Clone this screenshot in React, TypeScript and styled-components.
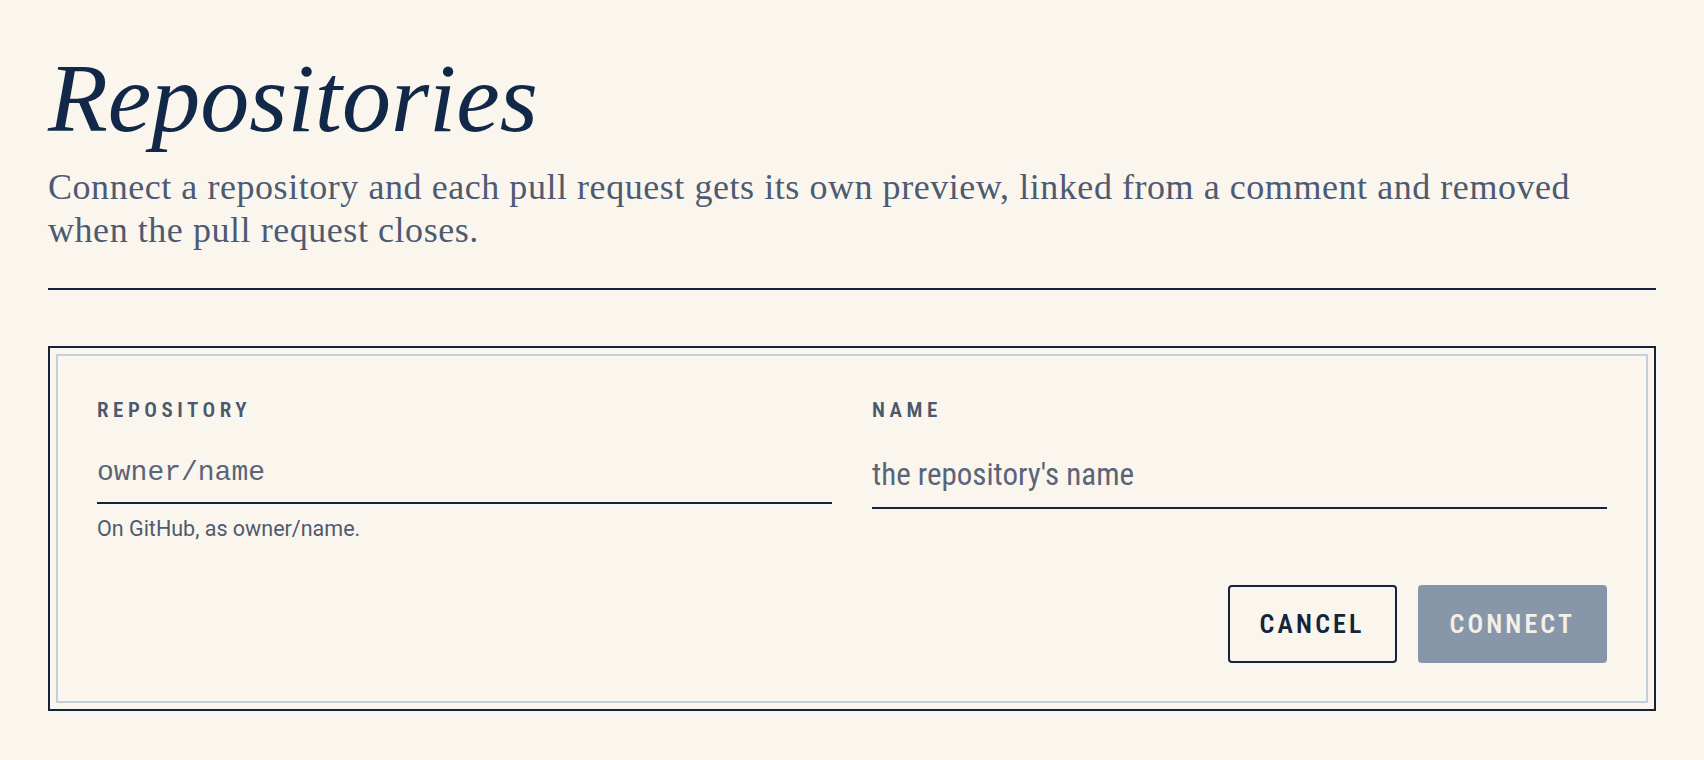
import React from "react";
import styled, { createGlobalStyle } from "styled-components";

const INK = "#14243b";
const MUTED = "#4d5a72";

const GlobalStyle = createGlobalStyle`
  html, body {
    margin: 0;
    padding: 0;
    background: #faf6ee;
  }

  * {
    box-sizing: border-box;
  }
`;

const Page = styled.main`
  padding: 44px 48px 48px;
  display: flex;
  flex-direction: column;
`;

const Title = styled.h1`
  margin: 0;
  font-family: "Liberation Serif", "Times New Roman", serif;
  font-style: italic;
  font-weight: 400;
  font-size: 98px;
  line-height: 108px;
  color: #112848;
`;

const Lede = styled.p`
  margin: 14px 0 0;
  max-width: 1560px;
  font-family: "Liberation Serif", "Times New Roman", serif;
  font-size: 36px;
  line-height: 43px;
  letter-spacing: 0.55px;
  color: ${MUTED};
`;

const Divider = styled.hr`
  margin: 36px 0 0;
  border: none;
  border-top: 2px solid ${INK};
`;

const Card = styled.form`
  margin-top: 56px;
  border: 2px solid ${INK};
  padding: 6px;
`;

const CardInner = styled.div`
  border: 2px solid #c3ced7;
  padding: 40px 39px 38px;
  display: flex;
  flex-direction: column;
`;

const Fields = styled.div`
  display: grid;
  grid-template-columns: 1fr 1fr;
  column-gap: 40px;
  align-items: start;
`;

const Field = styled.label`
  display: flex;
  flex-direction: column;
`;

const FieldLabel = styled.span`
  font-family: Roboto, "Liberation Sans", sans-serif;
  font-weight: 600;
  font-size: 21px;
  font-stretch: 87.5%;
  line-height: 28px;
  letter-spacing: 0.215em;
  text-transform: uppercase;
  color: #4b586d;
`;

const TextInput = styled.input<{ $mono?: boolean }>`
  margin-top: 19px;
  width: 100%;
  padding: ${(p) => (p.$mono ? "14px 0" : "13px 0 14px")};
  border: none;
  border-bottom: 2px solid ${INK};
  border-radius: 0;
  background: transparent;
  outline: none;
  color: ${INK};
  line-height: normal;
  font-family: ${(p) =>
    p.$mono ? `"Liberation Mono", "Courier New", monospace` : `Roboto, "Liberation Sans", sans-serif`};
  font-size: ${(p) => (p.$mono ? "28px" : "31px")};
  font-stretch: ${(p) => (p.$mono ? "100%" : "87.5%")};

  &::placeholder {
    color: #5b6477;
    opacity: 1;
  }
`;

const Hint = styled.span`
  margin-top: 13px;
  font-family: Roboto, "Liberation Sans", sans-serif;
  font-size: 21.5px;
  line-height: 24px;
  color: #4f5a6e;
`;

const Actions = styled.div`
  margin-top: 44px;
  display: flex;
  justify-content: flex-end;
  gap: 21px;
`;

const ActionButton = styled.button<{ $primary?: boolean }>`
  height: 78px;
  padding: 0 30px;
  border-radius: 4px;
  border: 2px solid ${(p) => (p.$primary ? "#8796a8" : INK)};
  background: ${(p) => (p.$primary ? "#8796a8" : "transparent")};
  color: ${(p) => (p.$primary ? "#f4f0e7" : INK)};
  font-family: Roboto, "Liberation Sans", sans-serif;
  font-weight: 600;
  font-size: 26px;
  font-stretch: 85%;
  letter-spacing: 0.12em;
  text-transform: uppercase;
  cursor: ${(p) => (p.$primary ? "not-allowed" : "pointer")};
`;

export default function App() {
  return (
    <>
      <GlobalStyle />
      <Page>
        <Title>Repositories</Title>
        <Lede>
          Connect a repository and each pull request gets its own preview, linked from a
          comment and removed when the pull request closes.
        </Lede>
        <Divider />

        <Card onSubmit={(e) => e.preventDefault()}>
          <CardInner>
            <Fields>
              <Field>
                <FieldLabel>Repository</FieldLabel>
                <TextInput $mono placeholder="owner/name" />
                <Hint>On GitHub, as owner/name.</Hint>
              </Field>
              <Field>
                <FieldLabel>Name</FieldLabel>
                <TextInput placeholder="the repository's name" />
              </Field>
            </Fields>

            <Actions>
              <ActionButton type="button">Cancel</ActionButton>
              <ActionButton type="submit" $primary disabled>
                Connect
              </ActionButton>
            </Actions>
          </CardInner>
        </Card>
      </Page>
    </>
  );
}
